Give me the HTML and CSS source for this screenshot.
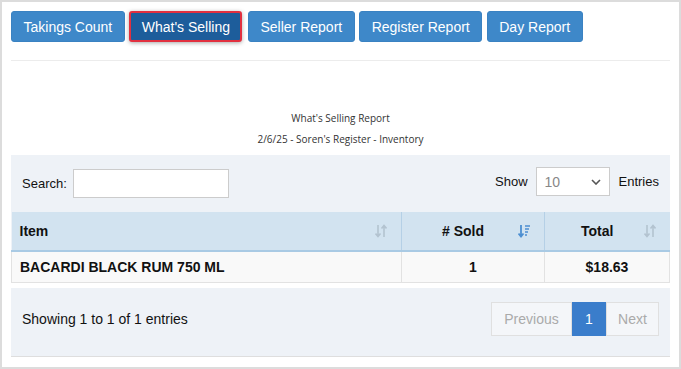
FILE: index.html
```html
<!DOCTYPE html>
<html lang="en">
<head>
    <meta charset="UTF-8">
    <title>What's Selling</title>
    <link rel="stylesheet" href="styles.css">
</head>
<body>
    <div class="page">
        <div class="report-tabs">
            <button class="tab">Takings Count</button>
            <button class="tab active">What's Selling</button>
            <button class="tab">Seller Report</button>
            <button class="tab">Register Report</button>
            <button class="tab">Day Report</button>
        </div>
        <hr class="divider">
        <div class="report-title">
            <p>What's Selling Report</p>
            <p>2/6/25 - Soren's Register - Inventory</p>
        </div>
        <div class="table-wrap">
            <div class="table-tools">
                <label class="search">Search: <input type="text"></label>
                <label class="length">Show
                    <span class="select">10
                        <svg width="10" height="6" viewBox="0 0 10 6"><path d="M1 1l4 4 4-4" fill="none" stroke="#555" stroke-width="1.6"/></svg>
                    </span>
                    Entries</label>
            </div>
            <table class="report-table">
                <colgroup>
                    <col class="w-item">
                    <col class="w-sold">
                    <col>
                </colgroup>
                <thead>
                    <tr>
                        <th class="col-item">Item
                            <svg class="sort" width="12" height="14" viewBox="0 0 12 14"><path d="M3 1v11M0.5 9.5L3 12.5 5.5 9.5M9 13V2M6.5 4.5L9 1.5 11.5 4.5" fill="none" stroke="#b3c3d0" stroke-width="1.6"/></svg>
                        </th>
                        <th class="col-num">
                            # Sold
                            <svg class="sort" width="12" height="14" viewBox="0 0 12 14"><path d="M3 1v11M0.5 9.5L3 12.5 5.5 9.5" fill="none" stroke="#4d8fd1" stroke-width="1.8"/><path d="M7 2h5M7 5h4M7 8h3M7 11h2" stroke="#4d8fd1" stroke-width="1.6"/></svg>
                        </th>
                        <th class="col-num last">
                            Total
                            <svg class="sort" width="12" height="14" viewBox="0 0 12 14"><path d="M3 1v11M0.5 9.5L3 12.5 5.5 9.5M9 13V2M6.5 4.5L9 1.5 11.5 4.5" fill="none" stroke="#b3c3d0" stroke-width="1.6"/></svg>
                        </th>
                    </tr>
                </thead>
                <tbody>
                    <tr>
                        <td>BACARDI BLACK RUM 750 ML</td>
                        <td class="num">1</td>
                        <td class="num">$18.63</td>
                    </tr>
                </tbody>
            </table>
        </div>
        <div class="table-footer">
            <span>Showing 1 to 1 of 1 entries</span>
            <div class="pager">
                <span class="page-btn prev">Previous</span>
                <span class="page-btn current">1</span>
                <span class="page-btn next">Next</span>
            </div>
        </div>
    </div>
</body>
</html>
```

FILE: styles.css
```css
body {
    margin: 0;
    background-color: #dcdcdc;
    font-family: 'Liberation Sans', Arial, sans-serif;
    color: #111;
    padding: 2px;
    height: 369px;
    box-sizing: border-box;
}
.page {
    background-color: #fff;
    padding: 9px;
    height: 100%;
    box-sizing: border-box;
}
.report-tabs {
    display: flex;
    gap: 4.5px;
}
.tab {
    background-color: #3e88c9;
    color: #fff;
    border: 1px solid #3a82c2;
    border-radius: 3px;
    font-family: 'Liberation Sans', Arial, sans-serif;
    font-size: 14px;
    height: 31px;
    padding: 0 11.5px;
    cursor: pointer;
}
.tab.active {
    background-color: #1d5d9b;
    border: 2px solid #e2303f;
    box-shadow: 0 1px 4px rgba(0, 0, 0, 0.35);
    padding: 0 10.5px;
    margin-right: 1px;
}
.divider {
    border: none;
    border-top: 1px solid #ececec;
    margin: 18px 0 0;
}
.report-title {
    text-align: center;
    font-family: 'Open Sans', sans-serif;
    font-size: 10px;
    color: #333;
    padding-top: 50px;
}
.report-title p {
    margin: 0 0 7px;
    line-height: 14px;
}
.table-wrap {
    margin-top: 9px;
    background-color: #eef2f7;
}
.table-tools {
    display: flex;
    justify-content: space-between;
    align-items: flex-start;
    height: 57px;
    padding: 0 11px;
    font-size: 13px;
}
.search {
    margin-top: 14px;
    display: flex;
    align-items: center;
    gap: 6px;
}
.search input {
    box-sizing: border-box;
    width: 156px;
    height: 29px;
    border: 1px solid #ccc;
    margin: 0;
}
.length {
    margin-top: 12px;
    display: flex;
    align-items: center;
    gap: 8px;
}
.length .select {
    box-sizing: border-box;
    width: 74px;
    height: 29px;
    background: #fff;
    border: 1px solid #ccc;
    display: flex;
    align-items: center;
    justify-content: space-between;
    padding: 0 8px;
    color: #888;
    font-size: 14px;
    margin-right: 1px;
}
.report-table {
    width: 100%;
    border-collapse: collapse;
    table-layout: fixed;
    font-size: 14px;
}
.w-item {
    width: 390px;
}
.w-sold {
    width: 143px;
}
.report-table th {
    background-color: #d2e3f0;
    height: 38px;
    border-bottom: 2px solid #a9cae4;
    border-right: 1px solid #b5d0e6;
    position: relative;
    text-align: center;
    padding: 0 20px 0 0;
}
.report-table th.last {
    border-right: none;
}
.report-table th.col-item {
    text-align: left;
    padding-left: 8px;
}
.report-table .sort {
    position: absolute;
    right: 14px;
    top: 12px;
}
.report-table td {
    background-color: #f9f9f9;
    font-weight: bold;
    height: 30px;
    padding: 0 8px;
    border: 1px solid #e2e2e2;
    border-top: none;
}
.report-table td.num {
    text-align: center;
}
.table-footer {
    margin-top: 5px;
    background-color: #eef2f7;
    border-bottom: 1px solid #dedede;
    box-sizing: border-box;
    height: 69px;
    display: flex;
    justify-content: space-between;
    align-items: center;
    padding: 0 11px 6px;
    font-size: 14px;
}
.pager {
    display: flex;
}
.page-btn {
    height: 34px;
    box-sizing: border-box;
    line-height: 32px;
    border: 1px solid #e0e0e0;
    background-color: #f4f6f9;
    color: #aaa;
    text-align: center;
}
.page-btn.prev {
    width: 81px;
}
.page-btn.next {
    width: 53px;
}
.page-btn.current {
    background-color: #3a7dcb;
    border-color: #3a7dcb;
    color: #fff;
    width: 34px;
}
```
